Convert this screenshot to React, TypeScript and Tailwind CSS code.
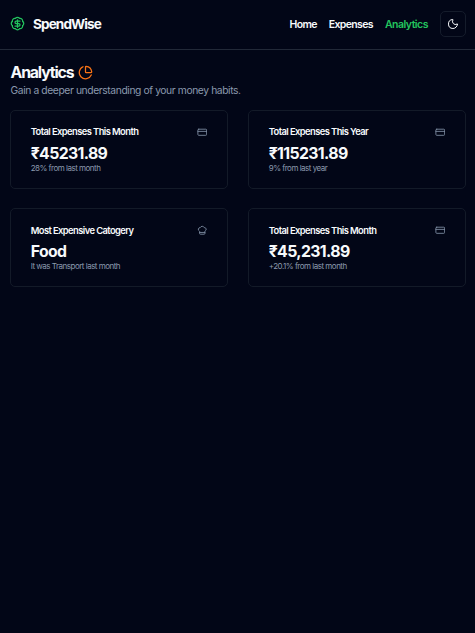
import type { ReactNode } from "react";
import { BadgeDollarSign, ChefHat, CreditCard, Moon, PieChart } from "lucide-react";

type Stat = { title: string; value: string; note: string; icon: ReactNode };

const card = <CreditCard size={10.5} />;

const stats: Stat[] = [
  { title: "Total Expenses This Month", value: "₹45231.89", note: "28% from last month", icon: card },
  { title: "Total Expenses This Year", value: "₹115231.89", note: "9% from last year", icon: card },
  { title: "Most Expensive Catogery", value: "Food", note: "It was Transport last month", icon: <ChefHat size={10.5} /> },
  { title: "Total Expenses This Month", value: "₹45,231.89", note: "+20.1% from last month", icon: card },
];

function Header() {
  return (
    <header className="flex h-[50px] items-center justify-between border-b border-[#222938] pr-[9px] pb-px pl-[10px]">
      <div className="flex items-center gap-2 text-[13.6px] font-bold tracking-[-0.9px]">
        <BadgeDollarSign size={15} className="text-[#22c55e]" />
        <span className="pt-px">SpendWise</span>
      </div>
      <nav className="flex items-center gap-3 text-[10.5px] font-semibold tracking-[-0.65px]">
        <a className="pt-px">Home</a>
        <a className="pt-px">Expenses</a>
        <a className="pt-px tracking-[-0.5px] text-[#22c55e]">Analytics</a>
        <button className="flex size-[26px] items-center justify-center rounded-[5px] border border-[#151c2b]">
          <Moon size={12} />
        </button>
      </nav>
    </header>
  );
}

function StatCard({ title, value, note, icon }: Stat) {
  return (
    <section className="h-[79px] rounded-[5px] border border-[#131a28] pr-5 pl-[19.7px] pt-[15px]">
      <div className="flex h-3 items-center justify-between">
        <h2 className="pt-px text-[9.4px] font-semibold whitespace-nowrap tracking-[-0.58px]">{title}</h2>
        <span className="text-[#7f8ea3]">{icon}</span>
      </div>
      <p className="mt-[6px] text-[15.8px] leading-5 font-bold tracking-[-0.62px]">{value}</p>
      <p className="-mt-px text-[8px] leading-[10px] tracking-[-0.5px] text-[#8b99ae]">{note}</p>
    </section>
  );
}

export default function App() {
  return (
    <div className="min-h-screen bg-[#020617] font-['Inter',sans-serif] text-[#f8fafc]">
      <Header />
      <main className="pt-[13px] pr-[9px] pl-[10px]">
        <h1 className="flex h-5 items-center gap-[5px] pl-[0.5px] text-[15.8px] font-bold tracking-[-1.15px]">
          Analytics
          <PieChart size={15} className="-mt-[2px] text-[#f97316]" />
        </h1>
        <p className="pl-[0.5px] text-[10.3px] leading-[15px] tracking-[-0.4px] text-[#8b99ae]">
          Gain a deeper understanding of your money habits.
        </p>
        <div className="mt-3 grid grid-cols-2 gap-x-5 gap-y-[19.4px]">
          {stats.map((stat, i) => (
            <StatCard key={i} {...stat} />
          ))}
        </div>
      </main>
    </div>
  );
}
